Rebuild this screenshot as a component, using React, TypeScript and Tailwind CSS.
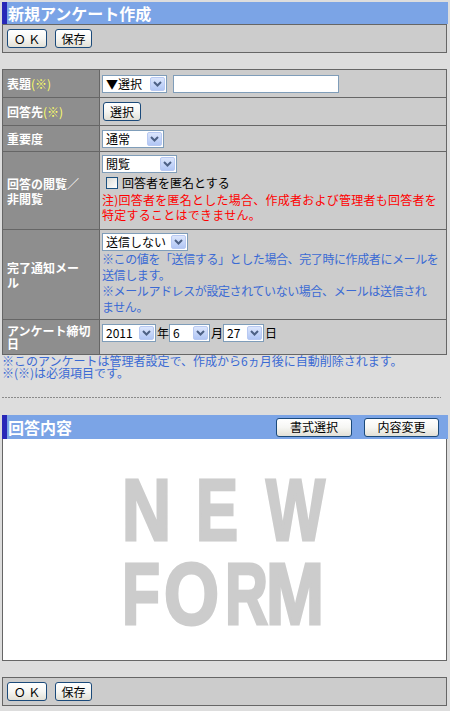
import React from 'react';

const Chevron = () => (
    <svg width="9" height="6" viewBox="0 0 9 6">
        <path d="M1 1 L4.5 4.5 L8 1" fill="none" stroke="#4d6185" strokeWidth="2" />
    </svg>
);

const Select = ({ text, w }: { text: React.ReactNode; w: string }) => (
    <div className={`${w} h-[18px] flex items-center border border-[#7f9db9] bg-white`}>
        <span className="flex-1 pl-[3px] text-[12px] leading-[16px] text-black whitespace-nowrap overflow-hidden">{text}</span>
        <span className="w-[15px] h-[14px] mr-[1px] flex items-center justify-center rounded-[2px] border border-[#b8c9f2] bg-linear-to-b from-[#dce6fc] to-[#b1c6f5]">
            <Chevron />
        </span>
    </div>
);

const XpButton = ({ children, w }: { children: React.ReactNode; w: string }) => (
    <button
        className={`${w} h-[19px] flex items-center justify-center rounded-[3px] border border-[#1b4a7a] bg-linear-to-b from-white via-[#f6f6f3] to-[#e2e0d6] text-[12px] leading-[14px] text-black`}
    >
        {children}
    </button>
);

const ToolBar = () => (
    <div className="ml-[2px] w-[445px] h-[29px] flex items-center gap-[8px] pl-[4px] border border-[#666666] bg-[#cccccc]">
        <XpButton w="w-[40px]">Ｏ Ｋ</XpButton>
        <XpButton w="w-[37px]">保存</XpButton>
    </div>
);

const Label = ({ children }: { children: React.ReactNode }) => (
    <div className="w-[97px] shrink-0 flex items-center pl-[4px] border-r border-[#666666] bg-[#8e8e8e] text-white font-bold text-[12px] whitespace-nowrap">
        {children}
    </div>
);

const Req = () => <span className="font-normal text-[#ffff66]">(※)</span>;

// big grey placeholder letters: [letter, x, baseline, advance]
const bigLetters: [string, number, number, number][] = [
    ['N', 119, 101, 49],
    ['E', 193, 101, 42],
    ['W', 263, 101, 59],
    ['F', 119, 185, 38],
    ['O', 161, 185, 55],
    ['R', 222, 185, 43],
    ['M', 263, 185, 58],
];

export default function App() {
    return (
        <div className="w-[450px] h-[711px] overflow-hidden bg-[#dddddd] pt-[2px] font-['Noto_Sans_CJK_JP','Noto_Sans',sans-serif] text-[12px] text-black">
            {/* title */}
            <div className="ml-[2px] w-[446px] h-[22px] flex items-center border-l-[5px] border-[#2828b8] bg-[#7ba4e6] pl-[1px] text-[16px] font-bold text-white leading-[20px]">
                新規アンケート作成
            </div>
            <ToolBar />

            {/* form table */}
            <div className="mt-[16px] ml-[2px] w-[445px] border border-[#666666] bg-[#cccccc]">
                <div className="h-[28px] flex border-b border-[#666666]">
                    <Label>
                        表題<Req />
                    </Label>
                    <div className="flex-1 flex items-center gap-[6px] pl-[2px]">
                        <Select w="w-[65px]" text="▼選択" />
                        <div className="w-[166px] h-[18px] border border-[#7f9db9] bg-white" />
                    </div>
                </div>
                <div className="h-[28px] flex border-b border-[#666666]">
                    <Label>
                        回答先<Req />
                    </Label>
                    <div className="flex-1 flex items-center pl-[3px]">
                        <XpButton w="w-[38px]">選択</XpButton>
                    </div>
                </div>
                <div className="h-[26px] flex border-b border-[#666666]">
                    <Label>重要度</Label>
                    <div className="flex-1 flex items-center pl-[2px]">
                        <Select w="w-[62px]" text="通常" />
                    </div>
                </div>
                <div className="h-[78px] flex border-b border-[#666666]">
                    <Label>
                        <span className="leading-[15px]">
                            回答の閲覧／
                            <br />
                            非閲覧
                        </span>
                    </Label>
                    <div className="flex-1 pl-[2px] pt-[3px]">
                        <Select w="w-[75px]" text="閲覧" />
                        <div className="mt-[1px] h-[18px] flex items-center gap-[4px] pl-[4px]">
                            <span className="w-[12px] h-[12px] border border-[#1c5180] bg-linear-to-br from-[#dcdcd7] to-white" />
                            <span className="leading-[16px]">回答者を匿名とする</span>
                        </div>
                        <div className="text-[#ff0000] leading-[15px] whitespace-nowrap tracking-[0.25px]">
                            注)回答者を匿名とした場合、作成者および管理者も回答者を
                            <br />
                            特定することはできません。
                        </div>
                    </div>
                </div>
                <div className="h-[90px] flex border-b border-[#666666]">
                    <Label>
                        <span className="leading-[15px]">
                            完了通知メー
                            <br />ル
                        </span>
                    </Label>
                    <div className="flex-1 pl-[2px] pt-[3px]">
                        <Select w="w-[86px]" text="送信しない" />
                        <div className="text-[#3a6ad4] leading-[16px] whitespace-nowrap tracking-[-0.4px]">
                            ※この値を「送信する」とした場合、完了時に作成者にメールを
                            <br />
                            送信します。
                            <br />
                            ※メールアドレスが設定されていない場合、メールは送信され
                            <br />
                            ません。
                        </div>
                    </div>
                </div>
                <div className="h-[34px] flex">
                    <Label>
                        <span className="leading-[13px]">
                            アンケート締切
                            <br />日
                        </span>
                    </Label>
                    <div className="flex-1 flex items-start pt-[4px] pl-[2px] leading-[18px]">
                        <Select w="w-[54px]" text="2011" />
                        <span className="w-[13px] pl-[1px]">年</span>
                        <Select w="w-[41px]" text="6" />
                        <span className="w-[13px] pl-[1px]">月</span>
                        <Select w="w-[41px]" text="27" />
                        <span className="pl-[1px]">日</span>
                    </div>
                </div>
            </div>

            {/* notes */}
            <div className="pl-[2px] text-[#3a6ad4] leading-[12px] whitespace-nowrap">
                ※このアンケートは管理者設定で、作成から6ヵ月後に自動削除されます。
                <br />
                ※(※)は必須項目です。
            </div>

            <div className="mt-[18px] ml-[2px] w-[439px] h-[1px] bg-[repeating-linear-gradient(90deg,#8a8a8a_0_2px,transparent_2px_3px)]" />

            {/* answer content */}
            <div className="mt-[17px] ml-[2px] w-[446px] h-[24px] flex items-center border-l-[5px] border-[#2828b8] bg-[#7ba4e6] pl-[1px] pr-[9px]">
                <span className="flex-1 text-[16px] font-bold text-white leading-[20px]">回答内容</span>
                <div className="flex gap-[12px]">
                    <XpButton w="w-[76px]">書式選択</XpButton>
                    <XpButton w="w-[75px]">内容変更</XpButton>
                </div>
            </div>
            <div className="ml-[2px] w-[445px] h-[222px] border border-t-0 border-[#666666] bg-white">
                <svg width="443" height="221" className="block">
                    {bigLetters.map(([ch, x, y, len]) => (
                        <text
                            key={ch}
                            x={x}
                            y={y}
                            textLength={len}
                            lengthAdjust="spacingAndGlyphs"
                            fill="#cccccc"
                            stroke="#cccccc"
                            strokeWidth="3"
                            strokeLinejoin="miter"
                            fontFamily="Liberation Sans, Arial, sans-serif"
                            fontWeight="700"
                            fontSize="88"
                        >
                            {ch}
                        </text>
                    ))}
                </svg>
            </div>

            <div className="mt-[16px]">
                <ToolBar />
            </div>
        </div>
    );
}
